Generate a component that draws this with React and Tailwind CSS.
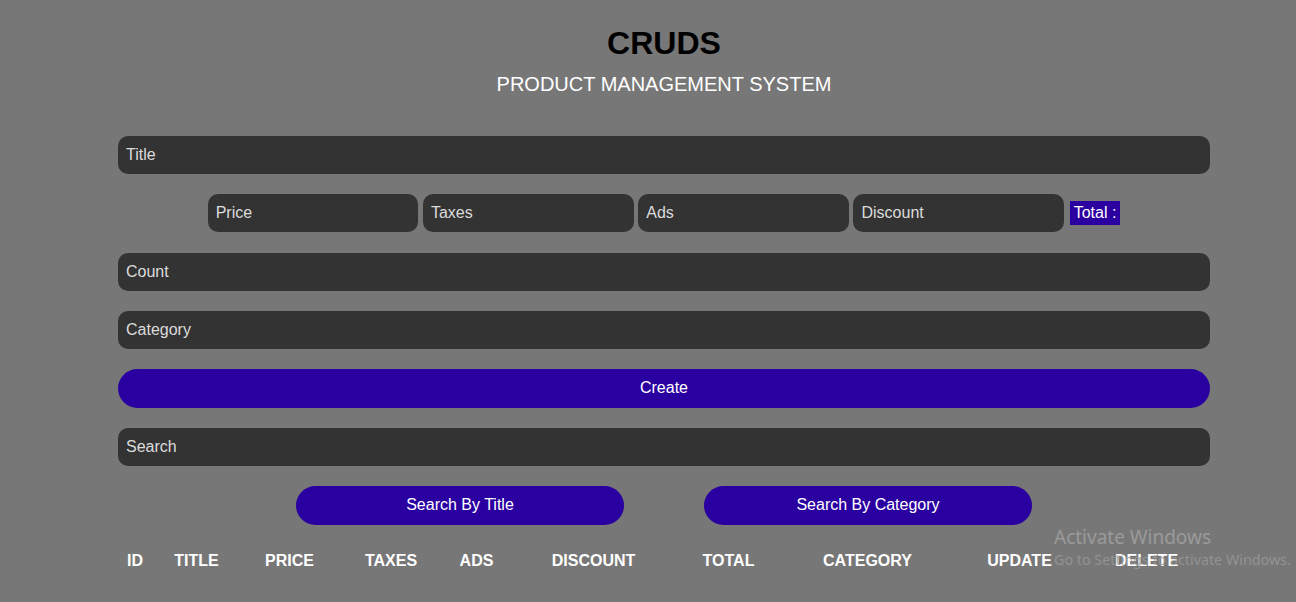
import React from "react";

const cols = ["ID", "TITLE", "PRICE", "TAXES", "ADS", "DISCOUNT", "TOTAL", "CATEGORY", "UPDATE", "DELETE"];

function Field({ placeholder, className = "" }) {
  return (
    <input
      placeholder={placeholder}
      className={
        "h-[38px] rounded-[10px] bg-[#333333] px-[8px] text-[16px] text-white outline-none placeholder:text-[#dcdcdc] " +
        className
      }
    />
  );
}

export default function App() {
  return (
    <div
      className="relative min-h-[602px] w-full bg-[#777777] text-white"
      style={{ fontFamily: '"Liberation Sans", Arial, sans-serif' }}
    >
      <div className="ml-[118px] w-[1092px] pt-[25px]">
        <h1 className="text-center text-[32px] font-bold leading-[37px] text-black">CRUDS</h1>
        <h2 className="mt-[11px] text-center text-[20px] leading-[23px] text-white">PRODUCT MANAGEMENT SYSTEM</h2>

        <div className="mt-[40px] flex flex-col gap-[20px]">
          <Field placeholder="Title" className="w-full" />

          <div className="flex h-[38.5px] items-center justify-center">
            <Field placeholder="Price" className="h-[38.5px] w-[210.7px]" />
            <Field placeholder="Taxes" className="ml-[4.6px] h-[38.5px] w-[210.7px]" />
            <Field placeholder="Ads" className="ml-[4.6px] h-[38.5px] w-[210.7px]" />
            <Field placeholder="Discount" className="ml-[4.6px] h-[38.5px] w-[210.7px]" />
            <span className="ml-[5.5px] bg-[#2a00a0] px-[4px] text-[16px] leading-[24px] text-white">Total :</span>
          </div>

          <Field placeholder="Count" className="w-full" />
          <Field placeholder="Category" className="w-full" />

          <button className="h-[39px] w-full rounded-full bg-[#2a00a0] text-[16px] text-white">Create</button>

          <Field placeholder="Search" className="w-full" />

          <div className="flex justify-center gap-[80px]">
            <button className="h-[39px] w-[328px] rounded-full bg-[#2a00a0] text-[16px] text-white">Search By Title</button>
            <button className="h-[39px] w-[328px] rounded-full bg-[#2a00a0] text-[16px] text-white">Search By Category</button>
          </div>
        </div>

        <div className="mt-[25px] grid grid-cols-[34px_89px_97px_106px_65px_169px_101px_177px_127px_127px] text-center text-[16px] font-bold leading-[22px] text-white">
          {cols.map((c) => (
            <div key={c}>{c}</div>
          ))}
        </div>
      </div>

      <div
        className="pointer-events-none absolute left-[1054px] top-[524px] text-[#9a9a9a]"
        style={{ fontFamily: '"Noto Sans", "Open Sans", sans-serif' }}
      >
        <div className="text-[19px] leading-[26px]">Activate Windows</div>
        <div className="text-[14.3px] leading-[20px] opacity-80">Go to Settings to activate Windows.</div>
      </div>
    </div>
  );
}
